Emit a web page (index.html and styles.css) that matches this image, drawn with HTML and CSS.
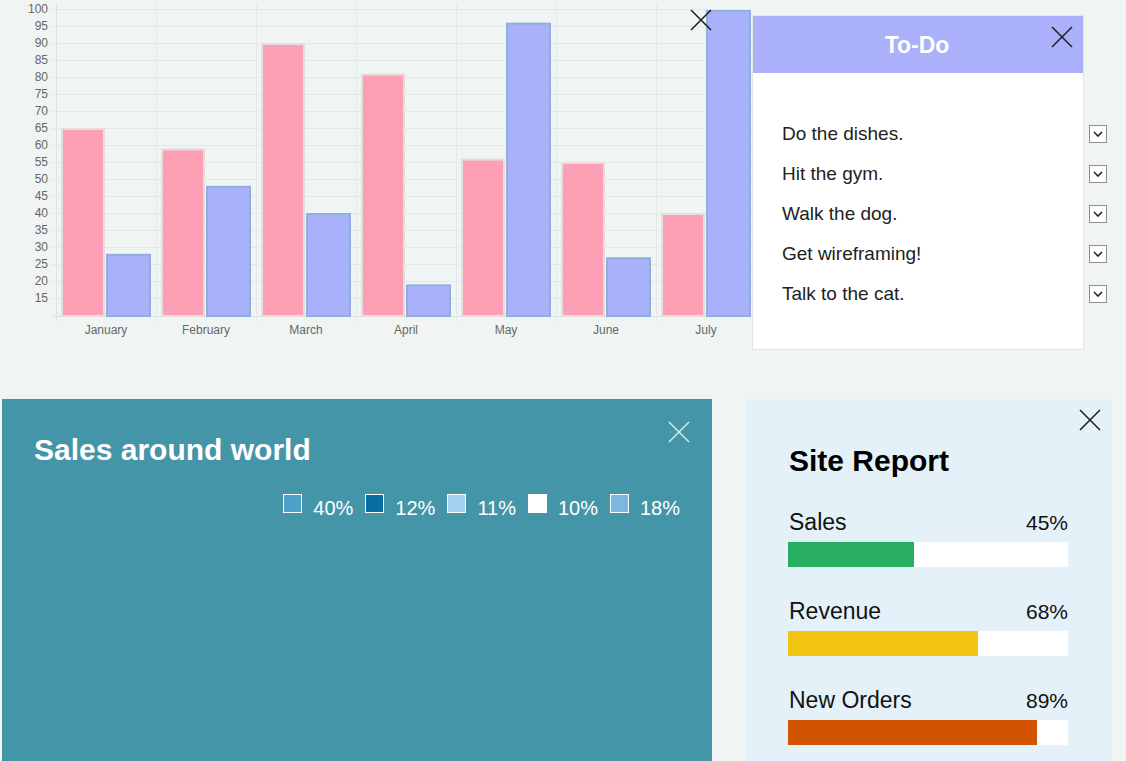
FILE: index.html
```html
<!DOCTYPE html>
<html lang="en">
<head>
<meta charset="utf-8">
<title>Dashboard</title>
<link rel="stylesheet" href="styles.css">
</head>
<body>
<div class="top">
  <section class="chart-widget">
    <svg class="chart" width="752" height="340" viewBox="0 0 752 340" xmlns="http://www.w3.org/2000/svg">
      <g class="grid" stroke="#e3e9e6" stroke-width="1">
        <line x1="52" y1="9.5" x2="752" y2="9.5"/>
        <line x1="52" y1="26.5" x2="752" y2="26.5"/>
        <line x1="52" y1="43.5" x2="752" y2="43.5"/>
        <line x1="52" y1="60.5" x2="752" y2="60.5"/>
        <line x1="52" y1="77.5" x2="752" y2="77.5"/>
        <line x1="52" y1="94.5" x2="752" y2="94.5"/>
        <line x1="52" y1="111.5" x2="752" y2="111.5"/>
        <line x1="52" y1="128.5" x2="752" y2="128.5"/>
        <line x1="52" y1="145.5" x2="752" y2="145.5"/>
        <line x1="52" y1="162.5" x2="752" y2="162.5"/>
        <line x1="52" y1="179.5" x2="752" y2="179.5"/>
        <line x1="52" y1="196.5" x2="752" y2="196.5"/>
        <line x1="52" y1="213.5" x2="752" y2="213.5"/>
        <line x1="52" y1="230.5" x2="752" y2="230.5"/>
        <line x1="52" y1="247.5" x2="752" y2="247.5"/>
        <line x1="52" y1="264.5" x2="752" y2="264.5"/>
        <line x1="52" y1="281.5" x2="752" y2="281.5"/>
        <line x1="52" y1="298.5" x2="752" y2="298.5"/>
        <line x1="52" y1="316.5" x2="752" y2="316.5" stroke="#dde3e0"/>
        <line x1="56.5" y1="4" x2="56.5" y2="321" stroke="#dde3e0"/>
        <line x1="156.5" y1="4" x2="156.5" y2="321"/>
        <line x1="256.5" y1="4" x2="256.5" y2="321"/>
        <line x1="356.5" y1="4" x2="356.5" y2="321"/>
        <line x1="456.5" y1="4" x2="456.5" y2="321"/>
        <line x1="556.5" y1="4" x2="556.5" y2="321"/>
        <line x1="656.5" y1="4" x2="656.5" y2="321"/>
      </g>
      <g class="ylabels" font-family="'Liberation Sans', Arial, sans-serif" font-size="12" fill="#666" text-anchor="end">
        <text x="48" y="13">100</text>
        <text x="48" y="30">95</text>
        <text x="48" y="47">90</text>
        <text x="48" y="64">85</text>
        <text x="48" y="81">80</text>
        <text x="48" y="98">75</text>
        <text x="48" y="115">70</text>
        <text x="48" y="132">65</text>
        <text x="48" y="149">60</text>
        <text x="48" y="166">55</text>
        <text x="48" y="183">50</text>
        <text x="48" y="200">45</text>
        <text x="48" y="217">40</text>
        <text x="48" y="234">35</text>
        <text x="48" y="251">30</text>
        <text x="48" y="268">25</text>
        <text x="48" y="285">20</text>
        <text x="48" y="302">15</text>
      </g>
      <g class="bars-a" fill="#fd9fb5" stroke="#e4dde0" stroke-width="2">
        <rect x="62" y="129" width="42" height="187"/>
        <rect x="162" y="149.4" width="42" height="166.6"/>
        <rect x="262" y="44" width="42" height="272"/>
        <rect x="362" y="74.6" width="42" height="241.4"/>
        <rect x="462" y="159.6" width="42" height="156.4"/>
        <rect x="562" y="163" width="42" height="153"/>
        <rect x="662" y="214" width="42" height="102"/>
      </g>
      <g class="bars-b" fill="#aab1fb" stroke="#8fb0dc" stroke-width="2">
        <rect x="107" y="254.8" width="43" height="61.2"/>
        <rect x="207" y="186.8" width="43" height="129.2"/>
        <rect x="307" y="214" width="43" height="102"/>
        <rect x="407" y="285.4" width="43" height="30.6"/>
        <rect x="507" y="23.6" width="43" height="292.4"/>
        <rect x="607" y="258.2" width="43" height="57.8"/>
        <rect x="707" y="11" width="43" height="305"/>
      </g>
      <g class="xlabels" font-family="'Liberation Sans', Arial, sans-serif" font-size="12" fill="#666" text-anchor="middle">
        <text x="106" y="334">January</text>
        <text x="206" y="334">February</text>
        <text x="306" y="334">March</text>
        <text x="406" y="334">April</text>
        <text x="506" y="334">May</text>
        <text x="606" y="334">June</text>
        <text x="706" y="334">July</text>
      </g>
    </svg>
    <button class="close close-chart" aria-label="Close">
      <svg width="22" height="22" viewBox="0 0 22 22"><path d="M1 1L21 21M21 1L1 21" stroke="currentColor" stroke-width="1.6" fill="none"/></svg>
    </button>
  </section>

  <section class="todo">
    <header class="todo-head">
      <h2 class="todo-title">To-Do</h2>
      <button class="close close-todo" aria-label="Close">
        <svg width="22" height="22" viewBox="0 0 22 22"><path d="M1 1L21 21M21 1L1 21" stroke="currentColor" stroke-width="1.6" fill="none"/></svg>
      </button>
    </header>
    <ul class="todo-list">
      <li class="todo-item"><span>Do the dishes.</span><span class="check"><svg width="10" height="6" viewBox="0 0 10 6"><path d="M1 1L5 5L9 1" stroke="#222" stroke-width="1.6" fill="none"/></svg></span></li>
      <li class="todo-item"><span>Hit the gym.</span><span class="check"><svg width="10" height="6" viewBox="0 0 10 6"><path d="M1 1L5 5L9 1" stroke="#222" stroke-width="1.6" fill="none"/></svg></span></li>
      <li class="todo-item"><span>Walk the dog.</span><span class="check"><svg width="10" height="6" viewBox="0 0 10 6"><path d="M1 1L5 5L9 1" stroke="#222" stroke-width="1.6" fill="none"/></svg></span></li>
      <li class="todo-item"><span>Get wireframing!</span><span class="check"><svg width="10" height="6" viewBox="0 0 10 6"><path d="M1 1L5 5L9 1" stroke="#222" stroke-width="1.6" fill="none"/></svg></span></li>
      <li class="todo-item"><span>Talk to the cat.</span><span class="check"><svg width="10" height="6" viewBox="0 0 10 6"><path d="M1 1L5 5L9 1" stroke="#222" stroke-width="1.6" fill="none"/></svg></span></li>
    </ul>
  </section>
</div>

<div class="bottom">
  <section class="sales">
    <h2 class="sales-title">Sales around world</h2>
    <button class="close close-sales" aria-label="Close">
      <svg width="22" height="22" viewBox="0 0 22 22"><path d="M1 1L21 21M21 1L1 21" stroke="currentColor" stroke-width="1.4" fill="none"/></svg>
    </button>
    <ul class="legend">
      <li class="legend-item"><span class="swatch sw1"></span><span>40%</span></li>
      <li class="legend-item"><span class="swatch sw2"></span><span>12%</span></li>
      <li class="legend-item"><span class="swatch sw3"></span><span>11%</span></li>
      <li class="legend-item"><span class="swatch sw4"></span><span>10%</span></li>
      <li class="legend-item"><span class="swatch sw5"></span><span>18%</span></li>
    </ul>
  </section>

  <section class="report">
    <button class="close close-report" aria-label="Close">
      <svg width="22" height="22" viewBox="0 0 22 22"><path d="M1 1L21 21M21 1L1 21" stroke="currentColor" stroke-width="1.6" fill="none"/></svg>
    </button>
    <h2 class="report-title">Site Report</h2>
    <div class="metric">
      <div class="metric-head"><span class="metric-name">Sales</span><span class="metric-val">45%</span></div>
      <div class="track"><div class="fill fill-green" style="width:45%"></div></div>
    </div>
    <div class="metric">
      <div class="metric-head"><span class="metric-name">Revenue</span><span class="metric-val">68%</span></div>
      <div class="track"><div class="fill fill-yellow" style="width:68%"></div></div>
    </div>
    <div class="metric">
      <div class="metric-head"><span class="metric-name">New Orders</span><span class="metric-val">89%</span></div>
      <div class="track"><div class="fill fill-orange" style="width:89%"></div></div>
    </div>
  </section>
</div>
</body>
</html>
```

FILE: styles.css
```css
html, body {
  margin: 0;
  padding: 0;
  overflow: hidden;
}
body {
  background: #f0f5f3;
  font-family: "Liberation Sans", Arial, sans-serif;
  color: #222;
  width: 1126px;
  height: 761px;
}
ul {
  list-style: none;
  margin: 0;
  padding: 0;
}
h2 {
  margin: 0;
}
.close {
  position: absolute;
  width: 22px;
  height: 22px;
  padding: 0;
  border: 0;
  background: none;
  color: #222;
  cursor: pointer;
  line-height: 0;
}
.close svg { display: block; }

.top {
  display: flex;
  align-items: flex-start;
}
.chart-widget {
  position: relative;
  width: 752px;
  height: 340px;
  flex: none;
}
.chart { display: block; }
.close-chart {
  left: 690px;
  top: 9px;
}

.todo {
  position: relative;
  margin-top: 15px;
  width: 332px;
  height: 335px;
  box-sizing: border-box;
  background: #fff;
  border: 1px solid #e0e6e3;
  flex: none;
}
.todo-head {
  position: relative;
  height: 57px;
  background: #aab1fa;
  display: flex;
  align-items: center;
  justify-content: center;
}
.todo-title {
  color: #fff;
  font-size: 23px;
  font-weight: bold;
  line-height: 26px;
  margin-left: -2px;
}
.close-todo {
  right: 10px;
  top: 10px;
}
.todo-list {
  padding: 41px 0 0 29px;
}
.todo-item {
  height: 40px;
  display: flex;
  align-items: center;
  justify-content: space-between;
  margin-right: -24px;
  font-size: 19px;
  color: #222;
}
.check {
  width: 18px;
  height: 18px;
  box-sizing: border-box;
  border: 1px solid #8e8e8e;
  background: #fff;
  display: flex;
  align-items: center;
  justify-content: center;
}

.bottom {
  display: flex;
  margin-top: 49px;
}
.sales {
  position: relative;
  margin-left: 2px;
  width: 710px;
  height: 362px;
  box-sizing: border-box;
  background: #4595a8;
  padding: 33px 32px 0 32px;
  flex: none;
}
.sales-title {
  color: #fff;
  font-size: 30px;
  font-weight: bold;
  line-height: 36px;
}
.close-sales {
  right: 22px;
  top: 22px;
  color: #dcecf0;
}
.legend {
  display: flex;
  justify-content: flex-end;
  gap: 12px;
  margin-top: 28px;
}
.legend-item {
  display: flex;
  align-items: flex-start;
  gap: 11px;
  color: #fff;
  font-size: 20px;
  line-height: 24px;
}
.swatch {
  width: 19px;
  height: 19px;
  box-sizing: border-box;
  border: 1.5px solid #fff;
  margin-top: -2px;
}
.sw1 { background: #4ea2c7; }
.sw2 { background: #086ea1; }
.sw3 { background: #a3d3ef; }
.sw4 { background: #fff; }
.sw5 { background: #7bb9dc; }

.report {
  position: relative;
  margin-left: 33px;
  width: 367px;
  height: 362px;
  box-sizing: border-box;
  background: #e4f1f9;
  padding: 44px 44px 0 43px;
  flex: none;
}
.close-report {
  right: 11px;
  top: 10px;
}
.report-title {
  font-size: 30px;
  font-weight: bold;
  line-height: 36px;
  color: #000;
  padding-left: 1px;
  margin-bottom: 30px;
}
.metric {
  margin-bottom: 31px;
}
.metric-head {
  display: flex;
  justify-content: space-between;
  align-items: baseline;
  height: 26px;
  margin-bottom: 7px;
  color: #111;
}
.metric-name {
  font-size: 23px;
  line-height: 26px;
  padding-left: 1px;
}
.metric-val {
  font-size: 21px;
  line-height: 26px;
}
.track {
  height: 25px;
  background: #fff;
}
.fill {
  height: 100%;
}
.fill-green { background: #27ae60; }
.fill-yellow { background: #f1c40f; }
.fill-orange { background: #d35400; }
```
